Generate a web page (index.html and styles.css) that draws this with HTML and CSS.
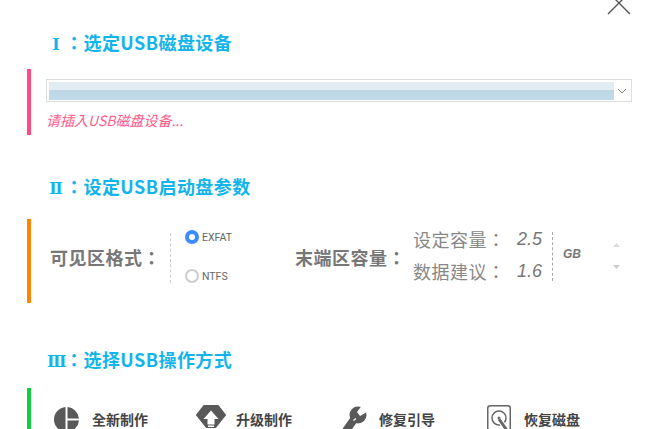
FILE: index.html
```html
<!DOCTYPE html>
<html>
<head>
    <meta charset="UTF-8">
    <title>USB启动盘制作</title>
    <link rel="stylesheet" href="styles.css">
</head>
<body>
    <div class="window">
        <svg class="close" width="24" height="16" viewBox="0 0 24 16"><path d="M1 14 L12 3 L1 -8 M23 14 L12 3 L23 -8" fill="none" stroke="#555" stroke-width="1.4"/></svg>

        <h2 class="title title-one"><span class="num">Ⅰ</span>：选定USB磁盘设备</h2>
        <section class="panel panel-pink">
            <div class="select">
                <div class="select-bar"></div>
                <svg class="select-arrow" width="10" height="6" viewBox="0 0 10 6"><path d="M1 1 L5 5 L9 1" fill="none" stroke="#888" stroke-width="1"/></svg>
            </div>
            <p class="hint">请插入USB磁盘设备...</p>
        </section>

        <h2 class="title title-two"><span class="num">Ⅱ</span>：设定USB启动盘参数</h2>
        <section class="panel panel-orange">
            <div class="label label-format">可见区格式：</div>
            <div class="sep sep-format"></div>
            <div class="radios">
                <div class="radio-row">
                    <span class="radio radio-on"></span>
                    <span>EXFAT</span>
                </div>
                <div class="radio-row">
                    <span class="radio"></span>
                    <span>NTFS</span>
                </div>
            </div>
            <div class="label label-end">末端区容量：</div>
            <div class="sizes">
                <div class="size-row"><span>设定容量：</span><em>2.5</em></div>
                <div class="size-row"><span>数据建议：</span><em>1.6</em></div>
            </div>
            <div class="sep sep-size"></div>
            <div class="unit">GB</div>
            <div class="spin">
                <svg width="7" height="4" viewBox="0 0 7 4"><path d="M3.5 0 L7 4 L0 4 Z" fill="#ddd"/></svg>
                <svg width="7" height="4" viewBox="0 0 7 4"><path d="M0 0 L7 0 L3.5 4 Z" fill="#ccc"/></svg>
            </div>
        </section>

        <h2 class="title title-three"><span class="num">Ⅲ</span>：选择USB操作方式</h2>
        <section class="panel panel-green">
            <div class="action action-new">
                <svg width="25" height="30" viewBox="0 0 25 30">
                    <path d="M11.500 2.040 V26.960 A12.500 12.500 0 0 1 11.500 2.040 Z" fill="#595959"/>
                    <path d="M13.500 2.040 A12.500 12.500 0 0 1 24.950 13.500 H13.500 Z" fill="#595959"/>
                    <path d="M13.500 15.500 H24.950 A12.500 12.500 0 0 1 13.500 26.960 Z" fill="#595959"/>
                </svg>
                <span>全新制作</span>
            </div>
            <div class="action action-up">
                <svg width="30" height="30" viewBox="0 0 30 30">
                    <path d="M8 1 H22 L29 10 L19.500 22 H10.500 L1 10 Z" fill="#595959" stroke="#595959" stroke-width="2" stroke-linejoin="round"/>
                    <path d="M15 5.500 L22.500 14 H18.500 V19.500 H11.500 V14 H7.500 Z" fill="#fff"/>
                    <rect x="12" y="20.500" width="6" height="1.500" fill="#fff"/>
                </svg>
                <span>升级制作</span>
            </div>
            <div class="action action-fix">
                <svg width="25" height="30" viewBox="0 0 25 30">
                    <path d="M4.500 25 L13 13" fill="none" stroke="#595959" stroke-width="8" stroke-linecap="round"/>
                    <circle cx="16" cy="10" r="8.500" fill="#595959"/>
                    <path d="M15 7 L18 11 L27 6 L21 -1 Z" fill="#fff"/>
                    <path d="M11.500 15.500 L14 13.500" fill="none" stroke="#fff" stroke-width="1.200"/>
                </svg>
                <span>修复引导</span>
            </div>
            <div class="action action-disk">
                <svg width="24" height="30" viewBox="0 0 24 30">
                    <rect x="0.750" y="0.750" width="22.500" height="34" rx="2.500" fill="none" stroke="#666" stroke-width="1.500"/>
                    <circle cx="12" cy="13" r="7" fill="none" stroke="#666" stroke-width="1.500"/>
                    <circle cx="12" cy="13" r="1.500" fill="#666"/>
                    <path d="M12 14 L21 27" fill="none" stroke="#fff" stroke-width="5"/>
                    <path d="M12 14 L21 27" fill="none" stroke="#666" stroke-width="3"/>
                </svg>
                <span>恢复磁盘</span>
            </div>
        </section>
    </div>
</body>
</html>
```

FILE: styles.css
```css
body {
    margin: 0;
    background-color: #fff;
    font-family: "Noto Sans CJK TC", "Liberation Sans", sans-serif;
}

.window {
    position: relative;
    height: 429px;
    overflow: hidden;
    padding-left: 27px;
    box-sizing: border-box;
}

.close {
    position: absolute;
    top: 0;
    right: 19px;
}

.title {
    margin: 0 0 0 20px;
    height: 24px;
    line-height: 22px;
    font-size: 18px;
    font-weight: bold;
    letter-spacing: 0.45px;
    color: #12b4ec;
}

.num {
    display: inline-block;
    width: 18px;
    text-align: center;
    font-family: "DejaVu Serif", serif;
    font-size: 16px;
    letter-spacing: 0;
}

.title-one {
    margin-top: 31px;
}

.title-two {
    margin-top: 40px;
}

.title-three {
    margin-top: 45px;
}

.panel {
    border-left: 4px solid;
    box-sizing: border-box;
}

.panel-pink {
    border-color: #ff4b82;
    margin-top: 14px;
    height: 66px;
    padding: 10px 0 0 15px;
}

.panel-orange {
    border-color: #ff8400;
    margin-top: 20px;
    height: 84px;
    display: flex;
    align-items: flex-start;
}

.panel-green {
    border-color: #0fce42;
    margin-top: 16px;
    height: 60px;
    display: flex;
    align-items: flex-start;
    padding-top: 17px;
}

.select {
    width: 586px;
    height: 23px;
    border: 1px solid #ddd;
    box-sizing: border-box;
    padding: 2px;
    display: flex;
    align-items: flex-start;
    justify-content: space-between;
}

.select-bar {
    width: 565px;
    height: 18px;
    background: linear-gradient(#e2ecf3 0, #e2ecf3 42%, #bcd6e5 44%, #c3dbe8 100%);
}

.select-arrow {
    margin: 6px 2px 0 0;
}

.hint {
    margin: 8px 0 0;
    line-height: 20px;
    font-size: 14px;
    font-style: italic;
    color: #ff5a8c;
}

.label {
    margin-top: 26px;
    line-height: 24px;
    font-size: 18px;
    font-weight: bold;
    letter-spacing: 0.5px;
    color: #777;
    white-space: nowrap;
}

.label-format {
    margin-left: 19px;
    width: 120px;
}

.label-end {
    width: 118px;
}

.sep {
    border-left: 1px dashed #ccc;
}

.sep-format {
    margin-top: 14px;
    height: 50px;
}

.sep-size {
    margin-top: 13px;
    height: 49px;
    border-color: #aaa;
}

.radios {
    margin: 11px 0 0 14px;
    width: 110px;
    display: flex;
    flex-direction: column;
    gap: 25px;
    font-family: Roboto, sans-serif;
    font-size: 10.5px;
    color: #666;
}

.radio-row {
    display: flex;
    align-items: center;
    gap: 3px;
    height: 14px;
}

.radio {
    width: 14px;
    height: 14px;
    border-radius: 50%;
    border: 2px solid #ccc;
    box-sizing: border-box;
}

.radio-on {
    border: 4px solid #3d8bff;
}

.sizes {
    margin-top: 7px;
    width: 139px;
    font-size: 18px;
    letter-spacing: 0.5px;
    color: #888;
    display: flex;
    flex-direction: column;
    gap: 6px;
}

.size-row {
    display: flex;
    justify-content: space-between;
    align-items: center;
    height: 26px;
    line-height: 26px;
    padding-right: 10px;
    white-space: nowrap;
}

.size-row em {
    font-family: "Liberation Sans", sans-serif;
    font-size: 18px;
    letter-spacing: 0;
    color: #777;
}

.unit {
    margin: 27px 0 0 10px;
    width: 50px;
    line-height: 16px;
    font-family: "Liberation Sans", sans-serif;
    font-size: 12px;
    font-weight: bold;
    font-style: italic;
    color: #777;
}

.spin {
    margin-top: 24px;
    display: flex;
    flex-direction: column;
    gap: 18px;
}

.spin svg {
    display: block;
}

.action {
    display: flex;
    align-items: center;
    height: 30px;
    font-size: 14px;
    font-weight: bold;
    color: #444;
}

.action svg {
    flex-shrink: 0;
}

.action span {
    padding-bottom: 2px;
}

.action-new {
    margin-left: 23px;
    width: 142px;
    gap: 13px;
}

.action-up {
    width: 146px;
    gap: 10px;
}

.action-fix {
    width: 145px;
    gap: 12px;
}

.action-disk {
    gap: 13px;
}
```
